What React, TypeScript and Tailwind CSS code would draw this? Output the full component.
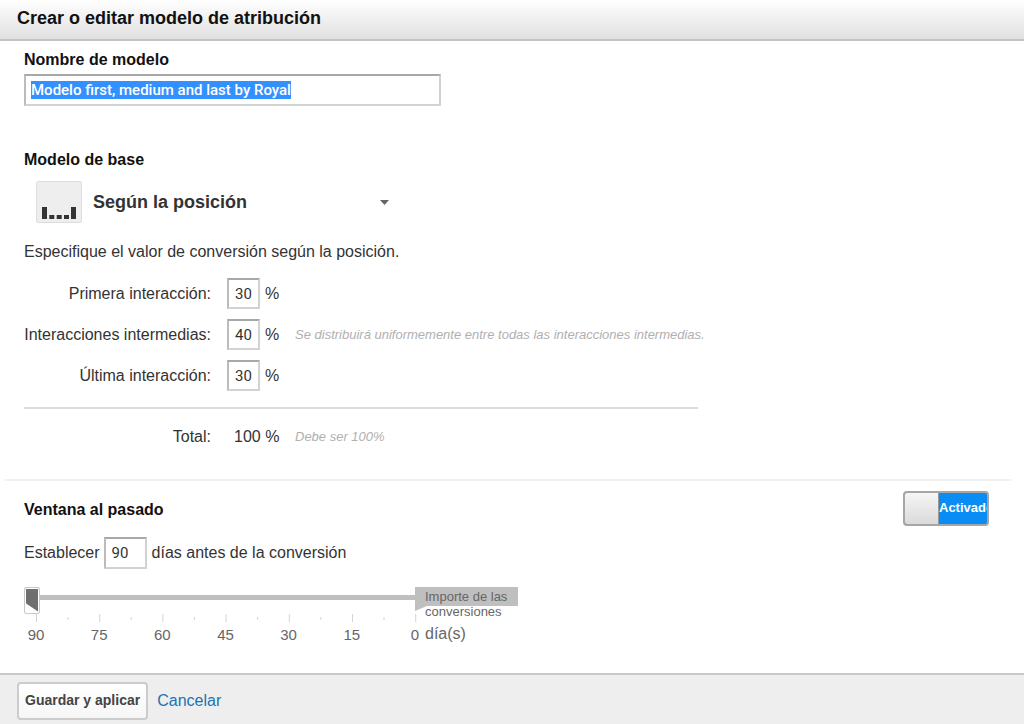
import { useState } from 'react';
import type React from 'react';

type PositionKey = 'first' | 'middle' | 'last';

interface PositionRow {
  key: PositionKey;
  label: string;
  hint?: string;
}

const POSITION_ROWS: PositionRow[] = [
  { key: 'first', label: 'Primera interacción:' },
  {
    key: 'middle',
    label: 'Interacciones intermedias:',
    hint: 'Se distribuirá uniformemente entre todas las interacciones intermedias.',
  },
  { key: 'last', label: 'Última interacción:' },
];

const DAY_LABELS = [90, 75, 60, 45, 30, 15, 0];

const fieldClass =
  'border-2 border-t-[#a8a8a8] border-l-[#bcbcbc] border-r-[#d2d2d2] border-b-[#d2d2d2] bg-white focus:outline-none';

const ModelIcon = () => (
  <svg width="46" height="42" viewBox="0 0 46 42" aria-hidden="true">
    <rect x="0.5" y="0.5" width="45" height="41" rx="1.5" fill="#eeeeee" stroke="#dddddd" />
    <g fill="#333333">
      <rect x="6" y="26" width="5" height="12" />
      <rect x="13.3" y="34" width="5" height="4" />
      <rect x="20.7" y="34" width="5" height="4" />
      <rect x="28" y="34" width="5" height="4" />
      <rect x="35" y="26" width="5" height="12" />
    </g>
  </svg>
);

const SliderTicks = () => (
  <svg width="382" height="8" viewBox="0 0 382 8" className="block" aria-hidden="true">
    {DAY_LABELS.map((day, i) => (
      <g key={day} fill="#d4d4d4">
        <rect x={i * 63.2} y="0" width="1" height="8" />
        {day > 0 && <rect x={i * 63.2 + 31.5} y="3" width="1" height="3" />}
      </g>
    ))}
  </svg>
);

interface LookbackSliderProps {
  value: string;
  onChange: (event: React.ChangeEvent<HTMLInputElement>) => void;
}

const LookbackSlider: React.FC<LookbackSliderProps> = ({ value, onChange }) => (
  <div className="mt-[18px] flex text-[#666666]">
    <div className="w-[391px] shrink-0">
      <input
        type="range"
        aria-label="Días antes de la conversión"
        min={0}
        max={90}
        dir="rtl"
        value={value}
        onChange={onChange}
        className="block h-[27px] w-full appearance-none bg-[linear-gradient(#bfbfbf,#bfbfbf)] bg-[length:100%_5px] bg-[position:0_8px] bg-no-repeat focus:outline-none [&::-webkit-slider-thumb]:h-[27px] [&::-webkit-slider-thumb]:w-4 [&::-webkit-slider-thumb]:appearance-none [&::-webkit-slider-thumb]:rounded-xs [&::-webkit-slider-thumb]:border [&::-webkit-slider-thumb]:border-[#c8c8c8] [&::-webkit-slider-thumb]:bg-[linear-gradient(34deg,#ffffff_8px,#6f6f6f_9px)] [&::-webkit-slider-thumb]:shadow-[inset_0_0_0_1px_#ffffff]"
      />
      <div className="pl-3">
        <SliderTicks />
      </div>
      <div className="mt-[3px] flex w-[403px] justify-between text-[15px] leading-5">
        {DAY_LABELS.map((day) => (
          <span key={day} className="w-6 text-center">
            {day}
          </span>
        ))}
      </div>
    </div>
    <div className="relative w-[103px]">
      <svg width="103" height="24" viewBox="0 0 103 24" className="absolute top-0 left-0" aria-hidden="true">
        <path d="M0 0H103V19H12L0 24Z" fill="#bfbfbf" />
      </svg>
      <p className="relative pt-[2px] pl-[10px] text-[13px] leading-[15px]">Importe de las conversiones</p>
      <p className="mt-[5px] pl-[10px] leading-5">día(s)</p>
    </div>
  </div>
);

const App: React.FC = () => {
  const [name, setName] = useState('Modelo first, medium and last by Royal');
  const [weights, setWeights] = useState<Record<PositionKey, string>>({ first: '30', middle: '40', last: '30' });
  const [days, setDays] = useState('90');
  const [enabled, setEnabled] = useState(true);

  const total = POSITION_ROWS.reduce((sum, row) => sum + (Number(weights[row.key]) || 0), 0);

  return (
    <form
      onSubmit={(event) => event.preventDefault()}
      className="flex min-h-screen flex-col bg-white font-['Liberation_Sans',Arial,sans-serif] text-base text-[#333333]"
    >
      <header className="border-b-2 border-[#c4c4c4] bg-linear-to-b from-white to-[#e0e0e0] px-[17px] pt-[5px] pb-[7px]">
        <h1 className="text-lg leading-[27px] font-bold text-[#111111]">Crear o editar modelo de atribución</h1>
      </header>

      <main className="flex-1 pb-5">
        <section className="px-6 pt-[9px]">
          <label htmlFor="name" className="block leading-5 font-bold text-[#111111]">
            Nombre de modelo
          </label>
          <div className={`mt-1 h-8 w-[417px] ${fieldClass}`}>
            <input
              id="name"
              value={name}
              onChange={(event) => setName(event.target.value)}
              className="mx-[5px] my-[5px] block h-[18px] field-sizing-content max-w-[400px] bg-[#3390ff] font-[Roboto,sans-serif] text-[15px] leading-[18px] font-medium text-white focus:outline-none"
            />
          </div>
        </section>

        <section className="px-6 pt-11">
          <label htmlFor="base" className="block leading-5 font-bold text-[#111111]">
            Modelo de base
          </label>
          <div className="mt-[11px] ml-3 flex w-[353px] items-center">
            <ModelIcon />
            <select
              id="base"
              className="ml-[11px] h-8 flex-1 appearance-none bg-transparent text-lg font-bold text-[#333333] focus:outline-none"
            >
              <option>Según la posición</option>
            </select>
            <svg width="9" height="5" viewBox="0 0 9 5" className="pointer-events-none" aria-hidden="true">
              <path d="M0 0H9L4.5 5Z" fill="#666666" />
            </svg>
          </div>

          <p className="mt-[19px] leading-5">Especifique el valor de conversión según la posición.</p>

          <div className="mt-4 flex flex-col gap-[10px]">
            {POSITION_ROWS.map((row) => (
              <div key={row.key} className="flex items-center">
                <label htmlFor={row.key} className="w-[187px] text-right whitespace-nowrap">
                  {row.label}
                </label>
                <input
                  id={row.key}
                  value={weights[row.key]}
                  onChange={(event) => setWeights({ ...weights, [row.key]: event.target.value })}
                  className={`ml-4 h-[31px] w-[33px] text-center font-[Roboto,sans-serif] text-[15px] ${fieldClass}`}
                />
                <span className="ml-[5px] w-[30px]">%</span>
                {row.hint && <span className="text-[13px] whitespace-nowrap text-[#b0b0b0] italic">{row.hint}</span>}
              </div>
            ))}
          </div>

          <hr className="mt-4 w-[674px] border-t-2 border-[#dcdcdc]" />

          <div className="mt-[18px] flex items-center leading-5">
            <span className="w-[187px] text-right">Total:</span>
            <span className="w-[84px] pl-[23px] whitespace-nowrap">{total} %</span>
            <span className="text-[13px] text-[#b0b0b0] italic">Debe ser 100%</span>
          </div>
        </section>

        <hr className="mt-8 mr-[13px] ml-[5px] border-t-2 border-[#f0f0f0]" />

        <section className="px-6">
          <div className="flex items-start justify-between pt-[10px] pr-[11px]">
            <h2 className="mt-[9px] leading-5 font-bold text-[#111111]">Ventana al pasado</h2>
            <label className="flex h-[35px] w-[86px] cursor-pointer overflow-hidden rounded-sm border-2 border-[#a6a6a6] bg-[#0a8cf5] text-[13px] font-bold text-white">
              <input
                type="checkbox"
                checked={enabled}
                onChange={(event) => setEnabled(event.target.checked)}
                className="w-[34px] shrink-0 appearance-none border-r border-[#999999] bg-linear-to-b from-[#f5f5f5] to-[#dadada] focus:outline-none"
              />
              <span className="leading-[30px]">Activado</span>
            </label>
          </div>

          <div className="mt-[11px] flex items-center">
            <label htmlFor="days">Establecer</label>
            <input
              id="days"
              value={days}
              onChange={(event) => setDays(event.target.value)}
              className={`ml-1 h-8 w-[43px] pl-[6px] font-[Roboto,sans-serif] text-[15px] ${fieldClass}`}
            />
            <span className="ml-[5px]">días antes de la conversión</span>
          </div>

          <LookbackSlider value={days} onChange={(event) => setDays(event.target.value)} />
        </section>
      </main>

      <footer className="flex items-center gap-[9px] border-t-2 border-[#c8c8c8] bg-[#eeeeee] px-[17px] pt-[7px] pb-1">
        <button
          type="submit"
          className="h-[38px] rounded-sm border-2 border-[#cccccc] bg-linear-to-b from-white to-[#f6f6f6] px-[6px] pb-[2px] text-sm font-bold text-[#444444]"
        >
          Guardar y aplicar
        </button>
        <a href="#cancelar" className="text-[#1a73b5]">
          Cancelar
        </a>
      </footer>
    </form>
  );
};

export default App;
